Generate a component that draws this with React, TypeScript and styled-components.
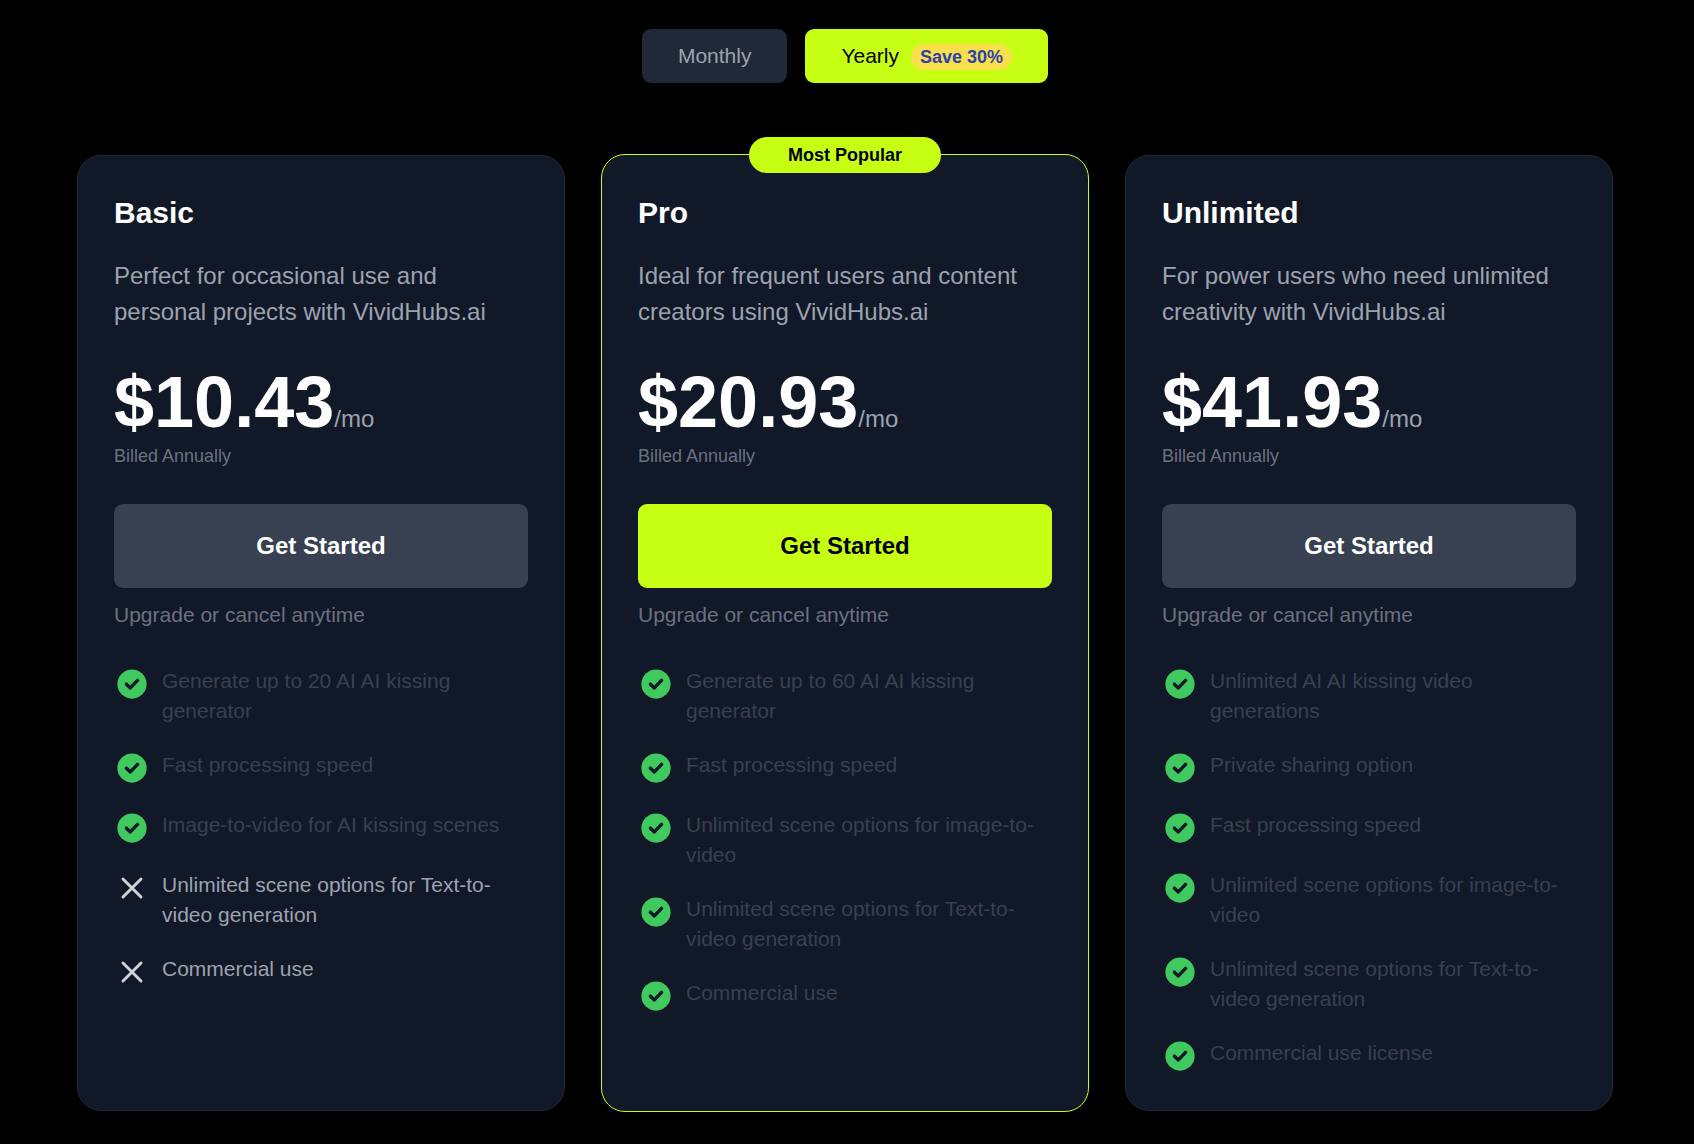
import React, { useState } from "react";
import styled, { createGlobalStyle } from "styled-components";

const lime = "#c6ff14";

const GlobalStyle = createGlobalStyle`
  * {
    box-sizing: border-box;
  }
  body {
    margin: 0;
    background: #000;
    color: #fff;
    font-family: "Liberation Sans", Arial, Helvetica, sans-serif;
    font-size: 24px;
    line-height: 36px;
  }
  button {
    font-family: inherit;
    border: 0;
    cursor: pointer;
  }
  h2, p, ul {
    margin: 0;
    padding: 0;
  }
`;

const Page = styled.main`
  padding: 29px 4px 32px 0;
`;

const BillingToggle = styled.div`
  display: flex;
  justify-content: center;
  gap: 18px;
  margin-bottom: 72px;
`;

const ToggleButton = styled.button<{ $active: boolean }>`
  display: flex;
  align-items: baseline;
  gap: 12px;
  padding: 12px 36px;
  border-radius: 9px;
  font-size: 21px;
  line-height: 30px;
  background: ${(p) => (p.$active ? lime : "#1f2937")};
  color: ${(p) => (p.$active ? "#000" : "#9ca3af")};
`;

const SaveTag = styled.span`
  padding: 1px 9px;
  border-radius: 999px;
  background: #f9e04b;
  color: #2b41ab;
  font-size: 18px;
  font-weight: 700;
  line-height: 24px;
`;

const Plans = styled.div`
  display: grid;
  grid-template-columns: repeat(3, minmax(0, 1fr));
  gap: 36px;
  max-width: 1536px;
  margin: 0 auto;
`;

const Card = styled.section<{ $featured?: boolean }>`
  position: relative;
  margin: ${(p) => (p.$featured ? "-1px 0" : "0")};
  padding: ${(p) => (p.$featured ? "37px 36px" : "36px")};
  border: 1px solid ${(p) => (p.$featured ? lime : "#1f2937")};
  border-radius: 24px;
  background: #111827;
`;

const PopularBadge = styled.span`
  position: absolute;
  top: -18px;
  left: 50%;
  transform: translateX(-50%);
  padding: 6px 39px;
  border-radius: 999px;
  background: ${lime};
  color: #000;
  font-size: 18px;
  font-weight: 700;
  line-height: 24px;
  white-space: nowrap;
`;

const PlanName = styled.h2`
  margin-bottom: 24px;
  font-size: 30px;
  line-height: 42px;
  font-weight: 700;
`;

const Description = styled.p`
  margin-bottom: 36px;
  color: #9ca3af;
`;

const Price = styled.p`
  margin-bottom: 6px;
  font-size: 72px;
  line-height: 72px;
  font-weight: 700;
`;

const Period = styled.span`
  color: #9ca3af;
  font-size: 24px;
  line-height: 36px;
  font-weight: 400;
`;

const Billing = styled.p`
  margin-bottom: 36px;
  color: #6b7280;
  font-size: 18px;
  line-height: 24px;
`;

const StartButton = styled.button<{ $featured?: boolean }>`
  display: block;
  width: 100%;
  padding: 24px;
  border-radius: 9px;
  font-size: 24px;
  line-height: 36px;
  font-weight: 700;
  background: ${(p) => (p.$featured ? lime : "#374151")};
  color: ${(p) => (p.$featured ? "#000" : "#fff")};
`;

const Note = styled.p`
  margin: 12px 0 36px;
  color: #6b7280;
  font-size: 21px;
  line-height: 30px;
`;

const Features = styled.ul`
  display: flex;
  flex-direction: column;
  gap: 24px;
  list-style: none;
`;

const Feature = styled.li<{ $included: boolean }>`
  display: flex;
  align-items: flex-start;
  gap: 12px;
  color: ${(p) => (p.$included ? "#374151" : "#9ca3af")};
  font-size: 21px;
  line-height: 30px;
`;

const Icon = styled.svg`
  flex: none;
  width: 36px;
  height: 36px;
`;

const CheckIcon = () => (
  <Icon viewBox="0 0 24 24" fill="none" aria-hidden="true">
    <circle cx="12" cy="12" r="9.75" fill="#40c95f" />
    <path
      d="M8.3 12.1 L10.9 14.6 L15.7 9.6"
      stroke="#111827"
      strokeWidth="2.3"
      strokeLinecap="round"
      strokeLinejoin="round"
    />
  </Icon>
);

const CrossIcon = () => (
  <Icon viewBox="0 0 24 24" fill="none" aria-hidden="true">
    <path d="M6 18 18 6M6 6l12 12" stroke="#d1d5db" strokeWidth="1.9" strokeLinecap="round" />
  </Icon>
);

interface Plan {
  name: string;
  description: string;
  price: string;
  featured?: boolean;
  included: string[];
  excluded: string[];
}

const plans: Plan[] = [
  {
    name: "Basic",
    description: "Perfect for occasional use and personal projects with VividHubs.ai",
    price: "$10.43",
    included: [
      "Generate up to 20 AI AI kissing generator",
      "Fast processing speed",
      "Image-to-video for AI kissing scenes",
    ],
    excluded: ["Unlimited scene options for Text-to-video generation", "Commercial use"],
  },
  {
    name: "Pro",
    description: "Ideal for frequent users and content creators using VividHubs.ai",
    price: "$20.93",
    featured: true,
    included: [
      "Generate up to 60 AI AI kissing generator",
      "Fast processing speed",
      "Unlimited scene options for image-to-video",
      "Unlimited scene options for Text-to-video generation",
      "Commercial use",
    ],
    excluded: [],
  },
  {
    name: "Unlimited",
    description: "For power users who need unlimited creativity with VividHubs.ai",
    price: "$41.93",
    included: [
      "Unlimited AI AI kissing video generations",
      "Private sharing option",
      "Fast processing speed",
      "Unlimited scene options for image-to-video",
      "Unlimited scene options for Text-to-video generation",
      "Commercial use license",
    ],
    excluded: [],
  },
];

const PlanCard = ({ plan }: { plan: Plan }) => (
  <Card $featured={plan.featured}>
    {plan.featured && <PopularBadge>Most Popular</PopularBadge>}
    <PlanName>{plan.name}</PlanName>
    <Description>{plan.description}</Description>
    <Price>
      {plan.price}
      <Period>/mo</Period>
    </Price>
    <Billing>Billed Annually</Billing>
    <StartButton type="button" $featured={plan.featured}>
      Get Started
    </StartButton>
    <Note>Upgrade or cancel anytime</Note>
    <Features>
      {plan.included.map((text) => (
        <Feature key={text} $included>
          <CheckIcon />
          <span>{text}</span>
        </Feature>
      ))}
      {plan.excluded.map((text) => (
        <Feature key={text} $included={false}>
          <CrossIcon />
          <span>{text}</span>
        </Feature>
      ))}
    </Features>
  </Card>
);

export default function App() {
  const [cycle, setCycle] = useState<"monthly" | "yearly">("yearly");
  return (
    <>
      <GlobalStyle />
      <Page>
        <BillingToggle>
          <ToggleButton
            type="button"
            $active={cycle === "monthly"}
            aria-pressed={cycle === "monthly"}
            onClick={() => setCycle("monthly")}
          >
            Monthly
          </ToggleButton>
          <ToggleButton
            type="button"
            $active={cycle === "yearly"}
            aria-pressed={cycle === "yearly"}
            onClick={() => setCycle("yearly")}
          >
            Yearly
            <SaveTag>Save 30%</SaveTag>
          </ToggleButton>
        </BillingToggle>
        <Plans>
          {plans.map((plan) => (
            <PlanCard key={plan.name} plan={plan} />
          ))}
        </Plans>
      </Page>
    </>
  );
}
